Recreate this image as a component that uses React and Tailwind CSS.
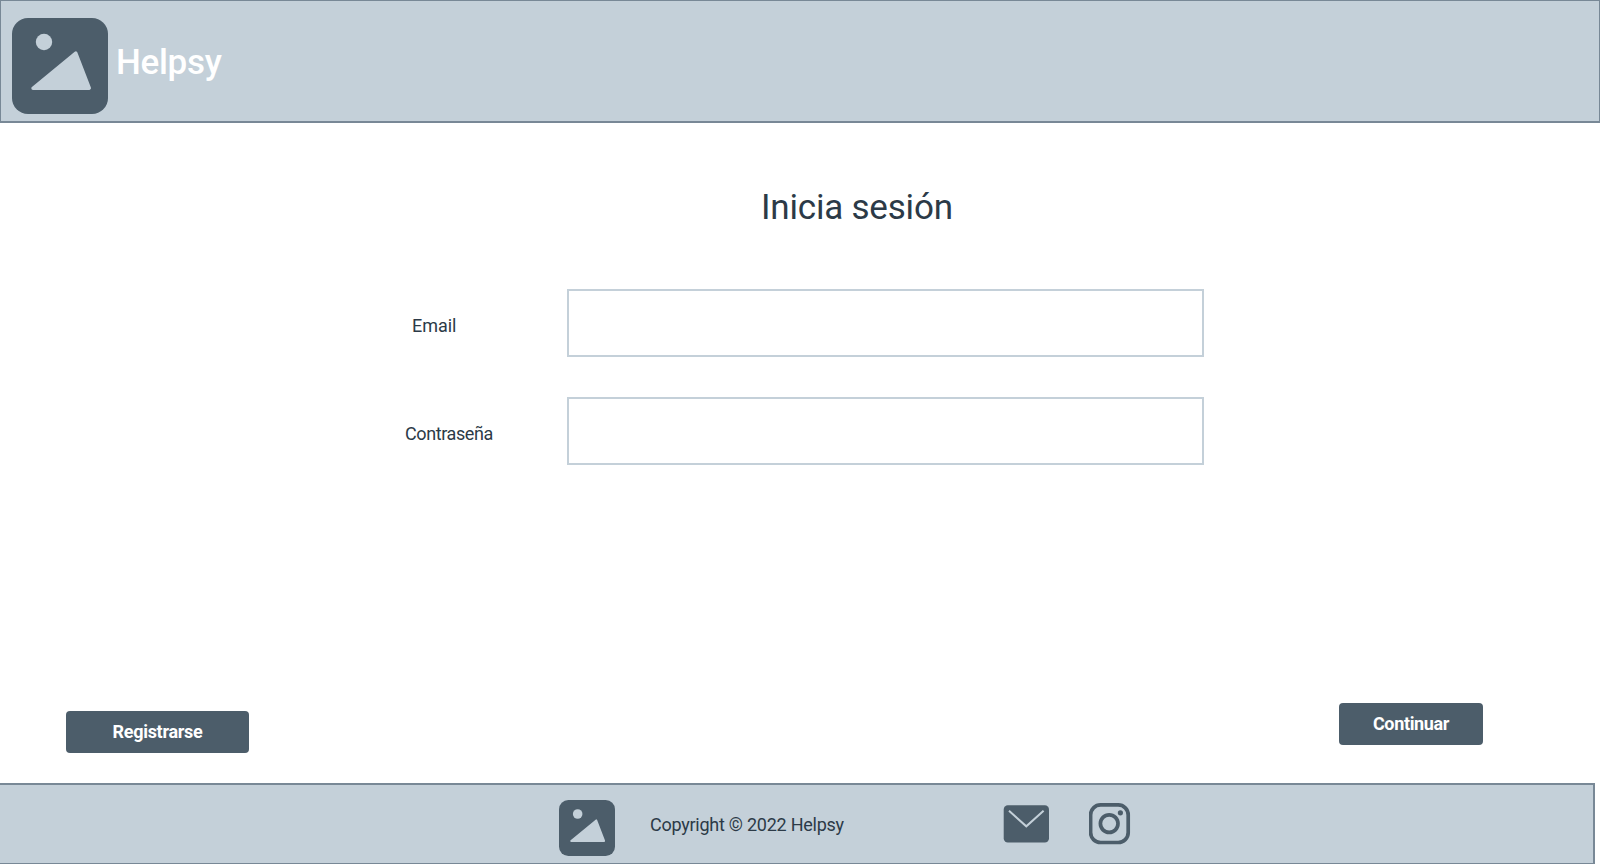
function PictureLogo({ className }) {
  return (
    <svg viewBox="0 0 96 96" className={className} aria-hidden="true">
      <rect width="96" height="96" rx="16" fill="#4c5d6a" />
      <circle cx="32" cy="24" r="8.2" fill="#c4d0d9" />
      <path d="M21 70.2 63.8 35 77.3 70.2Z" fill="#c4d0d9" stroke="#c4d0d9" strokeWidth="3.4" strokeLinejoin="round" />
    </svg>
  );
}

function MailIcon() {
  return (
    <svg viewBox="0 0 46 38" className="h-[38px] w-[46px]" aria-hidden="true">
      <rect x="0.7" y="0.2" width="45.3" height="37.4" rx="4.2" fill="#4c5d6a" />
      <path d="M6 5.8 23.3 21.3 40.6 5.8" fill="none" stroke="#c4d0d9" strokeWidth="2" />
    </svg>
  );
}

function InstagramIcon() {
  return (
    <svg viewBox="0 0 42 42" className="h-[42px] w-[42px]" aria-hidden="true">
      <rect x="1.6" y="1.9" width="37.6" height="37.6" rx="10" fill="none" stroke="#4c5d6a" strokeWidth="3.7" />
      <circle cx="20.2" cy="20.6" r="8.8" fill="none" stroke="#4c5d6a" strokeWidth="3.7" />
      <circle cx="31.4" cy="9.8" r="2.6" fill="#4c5d6a" />
    </svg>
  );
}

function Field({ id, type, label, labelClass }) {
  return (
    <div className="flex h-[68px]">
      <div className="w-[567px] shrink-0">
        <label htmlFor={id} className={labelClass}>{label}</label>
      </div>
      <input id={id} type={type} className="h-[68px] w-[637px] border-2 border-[#c4d0d9] bg-white px-4 outline-none" />
    </div>
  );
}

export default function App() {
  return (
    <div className="flex h-[864px] w-[1600px] flex-col overflow-hidden bg-white font-['Roboto',sans-serif] text-[#2c3a47]">
      <header className="flex h-[123px] shrink-0 border border-b-2 border-[#788896] bg-[#c4d0d9] pl-[11px] pt-[17px]">
        <PictureLogo className="h-24 w-24 shrink-0" />
        <span className="ml-[8px] mt-[25px] text-[35px] leading-[40px] font-medium tracking-[-0.3px] whitespace-nowrap text-white">Helpsy</span>
      </header>

      <main className="flex grow flex-col">
        <h1 className="ml-[761px] mt-[65px] text-[35px] leading-[40px] font-normal tracking-[-0.2px] whitespace-nowrap">Inicia sesión</h1>
        <div className="mt-[61px] flex flex-col gap-[40px]">
          <Field id="email" type="email" label="Email" labelClass="ml-[412px] mt-[27px] block text-[18px] leading-[20px] tracking-[-0.05px] whitespace-nowrap" />
          <Field id="password" type="password" label="Contraseña" labelClass="ml-[405px] mt-[27px] block text-[18px] leading-[20px] tracking-[-0.4px] whitespace-nowrap" />
        </div>
        <div className="mt-auto mb-[30px] flex h-[50px] justify-between pl-[66px] pr-[117px]">
          <button className="h-[42px] w-[183px] self-end rounded bg-[#4c5d6a] text-[18px] leading-[20px] font-bold tracking-[-0.3px] text-white">Registrarse</button>
          <button className="h-[42px] w-[144px] self-start rounded bg-[#4c5d6a] text-[18px] leading-[20px] font-bold tracking-[-0.35px] text-white">Continuar</button>
        </div>
      </main>

      <footer className="flex h-[81px] w-[1595px] shrink-0 border-t-2 border-r-2 border-b border-[#788896] bg-[#c4d0d9] pl-[559px]">
        <PictureLogo className="mt-[15px] h-14 w-14 shrink-0" />
        <span className="mt-[30px] ml-[35px] w-[353px] shrink-0 text-[18px] leading-[20px] tracking-[-0.25px] whitespace-nowrap">Copyright © 2022 Helpsy</span>
        <a href="#mail" aria-label="Email" className="mt-[20px]"><MailIcon /></a>
        <a href="#instagram" aria-label="Instagram" className="mt-[18px] ml-[40px]"><InstagramIcon /></a>
      </footer>
    </div>
  );
}
